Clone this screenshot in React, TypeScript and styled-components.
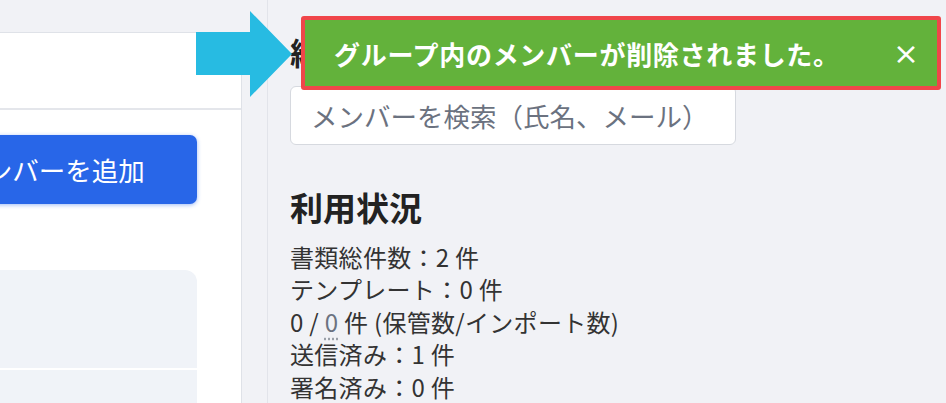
import React from "react";
import styled, { createGlobalStyle } from "styled-components";

const Global = createGlobalStyle`
  html, body { margin: 0; padding: 0; overflow: hidden; }
  body {
    background: #f1f2f6;
    font-family: "Noto Sans CJK JP", "Noto Sans", sans-serif;
    color: #333;
  }
  * { box-sizing: border-box; }
`;

const Page = styled.div`
  position: relative;
  display: flex;
  width: 946px;
  height: 403px;
  overflow: hidden;
`;

const Sidebar = styled.aside`
  flex: 0 0 354px;
  margin-left: -112px;
  margin-top: 32px;
  background: #fff;
  border-top: 1px solid #dfe2e8;
  border-right: 1px solid #dfe2e8;
  display: flex;
  flex-direction: column;
`;

const SidebarHeader = styled.div`
  height: 77px;
  border-bottom: 2px solid #e4e6eb;
`;

const SidebarBody = styled.div`
  padding: 25px 44px 0 19px;
  display: flex;
  flex-direction: column;
  flex: 1;
`;

const AddButton = styled.button`
  height: 69px;
  width: 100%;
  border: none;
  border-radius: 7px;
  background: #2866e8;
  color: #fff;
  font-family: inherit;
  font-size: 26.5px;
  padding: 0;
  box-shadow: 0 1px 4px rgba(40, 102, 232, 0.45);
  display: flex;
  align-items: center;
  justify-content: center;
`;

const GroupCard = styled.div`
  margin-top: 66px;
  flex: 1;
  background: #f0f3f8;
  border-radius: 0 12px 0 0;
  display: flex;
  flex-direction: column;
`;

const GroupRow = styled.div<{ $h?: number }>`
  height: ${(p) => (p.$h ? `${p.$h}px` : "auto")};
  flex: ${(p) => (p.$h ? "none" : "1")};
  border-bottom: ${(p) => (p.$h ? "2px solid #fff" : "none")};
`;

const Gutter = styled.div`
  flex: 0 0 26px;
  border-right: 1px solid #e2e4ea;
`;

const Main = styled.main`
  flex: 1;
  padding: 33px 0 0 22px;
  display: flex;
  flex-direction: column;
  align-items: flex-start;
`;

const Heading = styled.h2`
  margin: 0;
  font-size: 31px;
  line-height: 38px;
  font-weight: 700;
  color: #222;
`;

const Search = styled.input`
  margin-top: 15px;
  width: 446px;
  height: 59px;
  border: 1px solid #d6d9df;
  border-radius: 6px;
  background: #fff;
  padding: 0 20px;
  font-family: inherit;
  font-size: 26.5px;
  outline: none;
  &::placeholder { color: #6b7280; }
`;

const SectionTitle = styled.h3`
  margin: 38px 0 0 0;
  font-size: 33px;
  line-height: 48px;
  font-weight: 700;
  color: #222;
`;

const Stats = styled.div`
  margin-top: 10px;
  font-size: 24px;
  line-height: 32.5px;
  letter-spacing: 0.3px;
  color: #333;
`;

const StatLine = styled.div`
  white-space: nowrap;
`;

const Muted = styled.abbr`
  color: #6b7280;
  text-decoration: underline dotted #9aa0a8;
  text-underline-offset: 7px;
`;

const Toast = styled.div`
  position: absolute;
  left: 301px;
  top: 16px;
  width: 640px;
  height: 74px;
  background: #63b23b;
  border: 4px solid #f0464a;
  border-radius: 3px;
  display: flex;
  align-items: center;
  justify-content: space-between;
  padding: 0 18px 0 29px;
  color: #fff;
  z-index: 3;
`;

const ToastText = styled.span`
  font-size: 26px;
  font-weight: 700;
  letter-spacing: 0.7px;
`;

const Close = styled.span`
  font-family: "DejaVu Sans", sans-serif;
  font-size: 31px;
  font-weight: 400;
  line-height: 1;
`;

const Arrow = styled.svg`
  position: absolute;
  left: 196px;
  top: 11px;
  z-index: 2;
`;

export default function App() {
  return (
    <>
      <Global />
      <Page>
        <Sidebar>
          <SidebarHeader />
          <SidebarBody>
            <AddButton>メンバーを追加</AddButton>
            <GroupCard>
              <GroupRow $h={100} />
              <GroupRow />
            </GroupCard>
          </SidebarBody>
        </Sidebar>
        <Gutter />
        <Main>
          <Heading>組織メンバー</Heading>
          <Search placeholder="メンバーを検索（氏名、メール）" />
          <SectionTitle>利用状況</SectionTitle>
          <Stats>
            <StatLine>書類総件数：2 件</StatLine>
            <StatLine>テンプレート：0 件</StatLine>
            <StatLine>
              0 / <Muted title="インポート数">0</Muted> 件 (保管数/インポート数)
            </StatLine>
            <StatLine>送信済み：1 件</StatLine>
            <StatLine>署名済み：0 件</StatLine>
          </Stats>
        </Main>
        <Arrow width="97" height="87" viewBox="0 0 97 87">
          <path d="M0 21 H54 V0 L96 43 L54 86 V64 H0 Z" fill="#27bbe2" />
        </Arrow>
        <Toast>
          <ToastText>グループ内のメンバーが削除されました。</ToastText>
          <Close>×</Close>
        </Toast>
      </Page>
    </>
  );
}
